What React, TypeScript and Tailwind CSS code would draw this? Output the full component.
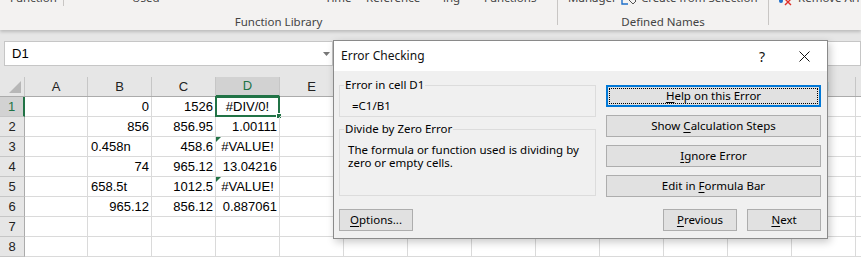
import React from "react";

const uiFont = "font-['Noto_Sans',sans-serif]";
const cellFont = "font-['Liberation_Sans',Arial,sans-serif]";

const cols = ["A", "B", "C", "D", "E", "F", "G", "H", "I", "J", "K", "L", "M", "N"];

type Row = {
  b?: string;
  bText?: boolean;
  c?: string;
  d?: string;
  dCenter?: boolean;
  flag?: boolean;
};

const rows: Row[] = [
  { b: "0", c: "1526", d: "#DIV/0!", dCenter: true },
  { b: "856", c: "856.95", d: "1.00111" },
  { b: "0.458n", bText: true, c: "458.6", d: "#VALUE!", dCenter: true, flag: true },
  { b: "74", c: "965.12", d: "13.04216" },
  { b: "658.5t", bText: true, c: "1012.5", d: "#VALUE!", dCenter: true, flag: true },
  { b: "965.12", c: "856.12", d: "0.887061" },
  {},
  {},
];

function U({ children }: { children: React.ReactNode }) {
  return <span className="underline underline-offset-2">{children}</span>;
}

function Btn({ children, className = "" }: { children: React.ReactNode; className?: string }) {
  return (
    <div
      className={`h-[22px] flex items-center justify-center bg-[#e1e1e1] border border-[#adadad] text-[11.5px] text-black ${className}`}
    >
      {children}
    </div>
  );
}

function Ribbon() {
  return (
    <div className={`relative z-10 h-[30px] bg-[#f3f2f1] shadow-[0_2px_3px_rgba(0,0,0,0.18)] flex ${uiFont} text-[11.5px] text-[#444]`}>
      {/* Function Library */}
      <div className="w-[557px] flex flex-col shrink-0">
        <div className="flex h-[16px] -mt-[10px] leading-[16px] whitespace-nowrap">
          <span className="ml-[10px] w-[53px]">Function</span>
          <span className="w-px h-[14px] mt-[2px] bg-[#c8c6c4]" />
          <span className="ml-[68px] w-[193px]">Used</span>
          <span className="w-[41px]">Time</span>
          <span className="w-[77px]">Reference</span>
          <span className="w-[41px]">ing</span>
          <span>Functions</span>
        </div>
        <div className="mt-[8px] h-[16px] leading-[16px] text-center">Function Library</div>
      </div>
      <div className="w-px h-[25px] bg-[#c8c6c4] shrink-0" />
      {/* Defined Names */}
      <div className="w-[210px] flex flex-col shrink-0">
        <div className="flex h-[16px] -mt-[10px] leading-[16px] whitespace-nowrap items-start">
          <span className="ml-[10px] w-[53px]">Manager</span>
          <svg width="16" height="16" viewBox="0 0 16 16" className="mr-[4px]">
            <path d="M1 2v12h6" stroke="#1e6fc9" strokeWidth="1.4" fill="none" />
            <path d="M1 9h5" stroke="#1e6fc9" strokeWidth="1.4" />
            <path d="M8 10l4 4 3-3-4-4z" stroke="#555" strokeWidth="1" fill="none" />
          </svg>
          <span>Create from Selection</span>
        </div>
        <div className="mt-[8px] h-[16px] leading-[16px] text-center">Defined Names</div>
      </div>
      <div className="w-px h-[25px] bg-[#c8c6c4] shrink-0" />
      <div className="flex-1 flex flex-col">
        <div className="flex h-[16px] -mt-[10px] leading-[16px] whitespace-nowrap items-start">
          <svg width="18" height="16" viewBox="0 0 18 16" className="ml-[9px]">
            <circle cx="3" cy="11" r="2" fill="#1e6fc9" />
            <path d="M7 9l6 6M13 9l-6 6" stroke="#e0302a" strokeWidth="1.4" />
          </svg>
          <span className="ml-[2px]">Remove Arrows</span>
        </div>
      </div>
    </div>
  );
}

function FormulaArea() {
  return (
    <div className="h-[47px] bg-[#e6e6e6] flex items-start pt-[11px] pl-[4px]">
      <div className={`w-[329px] h-[25px] bg-white border border-[#c6c6c6] flex items-center justify-between pl-[7px] pr-[2px] ${cellFont} text-[13px] text-black`}>
        <span>D1</span>
        <svg width="7" height="4" viewBox="0 0 7 4">
          <path d="M0 0h7L3.5 4z" fill="#777" />
        </svg>
      </div>
      <div className="ml-[90px] flex-1 h-[25px] bg-white border border-[#c6c6c6]" />
    </div>
  );
}

function Grid() {
  return (
    <div className={`${cellFont} text-[13px] text-black bg-white`}>
      {/* header row */}
      <div className="flex h-[20px] bg-[#e6e6e6] border-b border-[#ababab]">
        <div className="w-[25px] shrink-0 border-r border-[#c6c6c6] relative">
          <svg width="12" height="12" viewBox="0 0 12 12" className="absolute right-[3px] bottom-[3px]">
            <path d="M12 0v12H0z" fill="#b7b7b7" />
          </svg>
        </div>
        {cols.map((c, i) => (
          <div
            key={c}
            className={`${i === 0 ? "w-[63px]" : "w-[64px]"} shrink-0 border-r border-[#c6c6c6] flex items-center justify-center ${
              c === "D" ? "bg-[#d2d2d2] text-[#217346] border-b-2 border-b-[#217346] -mb-px" : "text-[#222]"
            }`}
          >
            {c}
          </div>
        ))}
      </div>
      {rows.map((r, ri) => (
        <div key={ri} className="flex h-[20px]">
          <div
            className={`w-[25px] shrink-0 flex items-center justify-center border-b border-[#c6c6c6] ${
              ri === 0
                ? "bg-[#d2d2d2] text-[#217346] border-r-2 border-r-[#217346]"
                : "bg-[#e6e6e6] text-[#222] border-r border-r-[#ababab]"
            }`}
          >
            {ri + 1}
          </div>
          {cols.map((c, ci) => {
            let text: string | undefined;
            let align = "justify-end pr-[2px]";
            if (c === "B") {
              text = r.b;
              if (r.bText) align = "justify-start pl-[3px]";
            } else if (c === "C") {
              text = r.c;
            } else if (c === "D") {
              text = r.d;
              if (r.dCenter) align = "justify-center";
            }
            return (
              <div
                key={c}
                className={`${ci === 0 ? "w-[63px]" : "w-[64px]"} shrink-0 border-r border-b border-[#dadada] flex items-center relative ${align}`}
              >
                {c === "D" && r.flag && (
                  <svg width="5" height="5" viewBox="0 0 5 5" className="absolute left-0 top-0">
                    <path d="M0 0h5L0 5z" fill="#217346" />
                  </svg>
                )}
                <span className="leading-none">{text}</span>
                {c === "D" && ri === 0 && (
                  <div className="absolute -left-[1px] -top-[1px] w-[65px] h-[21px] border-2 border-[#217346]">
                    <div className="absolute -right-[4px] -bottom-[4px] w-[6px] h-[6px] bg-[#217346] border border-white" />
                  </div>
                )}
              </div>
            );
          })}
        </div>
      ))}
    </div>
  );
}

function Dialog() {
  return (
    <div
      className={`absolute left-[333px] top-[40px] w-[495px] h-[199px] border border-[#8a8a8a] bg-[#f0f0f0] shadow-[2px_3px_8px_rgba(0,0,0,0.22)] flex flex-col ${uiFont} text-[11.5px] text-black z-20`}
    >
      <div className="h-[30px] bg-white flex items-center pl-[7px] shrink-0">
        <span className="text-[12px] text-[#111]">Error Checking</span>
        <span className="ml-auto mr-[34px] text-[14px] text-[#111]">?</span>
        <svg width="11" height="11" viewBox="0 0 11 11" className="mr-[17px]">
          <path d="M0.5 0.5l10 10M10.5 0.5l-10 10" stroke="#111" strokeWidth="1" />
        </svg>
      </div>
      <div className="flex-1 flex pl-[5px] pr-[6px]">
        <div className="w-[257px] flex flex-col pt-[6px]">
          <fieldset className="h-[40px] border border-[#dcdcdc] px-0">
            <legend className="ml-[4px] px-[1px] leading-[16px]">Error in cell D1</legend>
            <div className="pt-[5px] pl-[12px] leading-[16px]">=C1/B1</div>
          </fieldset>
          <fieldset className="mt-[4px] h-[75px] border border-[#dcdcdc] px-0">
            <legend className="ml-[4px] px-[1px] leading-[16px]">Divide by Zero Error</legend>
            <div className="pt-[6px] pl-[8px] leading-[13px]">
              The formula or function used is dividing by
              <br />
              zero or empty cells.
            </div>
          </fieldset>
          <Btn className="mt-[13px] w-[74px]">
            <U>O</U>ptions...
          </Btn>
        </div>
        <div className="ml-[10px] flex-1 flex flex-col pt-[14px]">
          <div className="h-[22px] border-2 border-[#0078d7] bg-[#e1e1e1] p-px">
            <div className="h-full border border-dotted border-black flex items-center justify-center">
              <U>H</U>elp on this Error
            </div>
          </div>
          <Btn className="mt-[8px]">
            Show&nbsp;<U>C</U>alculation Steps
          </Btn>
          <Btn className="mt-[8px]">
            <U>I</U>gnore Error
          </Btn>
          <Btn className="mt-[8px]">
            Edit in&nbsp;<U>F</U>ormula Bar
          </Btn>
          <div className="mt-[12px] flex justify-end gap-[10px]">
            <Btn className="w-[74px]">
              <U>P</U>revious
            </Btn>
            <Btn className="w-[74px]">
              <U>N</U>ext
            </Btn>
          </div>
        </div>
      </div>
    </div>
  );
}

export default function App() {
  return (
    <div className="relative w-[861px] h-[257px] overflow-hidden bg-[#e6e6e6]">
      <Ribbon />
      <FormulaArea />
      <Grid />
      <Dialog />
    </div>
  );
}
